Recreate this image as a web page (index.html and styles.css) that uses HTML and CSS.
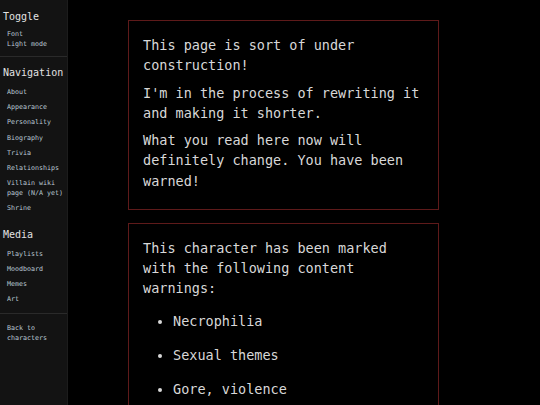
FILE: index.html
```html
<!DOCTYPE html>
<html>
<head>
<meta charset="utf-8">
<link rel="stylesheet" href="styles.css">
</head>
<body>
<div class="page">
  <nav class="sidebar">
    <div class="group">
      <h2 class="heading">Toggle</h2>
      <ul class="toggles">
        <li><a class="link">Font</a></li>
        <li><a class="link">Light mode</a></li>
      </ul>
    </div>
    <div class="group">
      <h2 class="heading">Navigation</h2>
      <ul class="links">
        <li><a class="link">About</a></li>
        <li><a class="link">Appearance</a></li>
        <li><a class="link">Personality</a></li>
        <li><a class="link">Biography</a></li>
        <li><a class="link">Trivia</a></li>
        <li><a class="link">Relationships</a></li>
        <li><a class="link">Villain wiki page (N/A yet)</a></li>
        <li><a class="link">Shrine</a></li>
      </ul>
      <h2 class="heading heading-sub">Media</h2>
      <ul class="links">
        <li><a class="link">Playlists</a></li>
        <li><a class="link">Moodboard</a></li>
        <li><a class="link">Memes</a></li>
        <li><a class="link">Art</a></li>
      </ul>
    </div>
    <div class="group group-last">
      <a class="link back">Back to characters</a>
    </div>
  </nav>
  <main class="content">
    <section class="box">
      <p>This page is sort of under construction!</p>
      <p>I'm in the process of rewriting it and making it shorter.</p>
      <p>What you read here now will definitely change. You have been warned!</p>
    </section>
    <section class="box">
      <p>This character has been marked with the following content warnings:</p>
      <ul class="warnings">
        <li>Necrophilia</li>
        <li>Sexual themes</li>
        <li>Gore, violence</li>
      </ul>
    </section>
  </main>
</div>
</body>
</html>
```
FILE: styles.css
```css
html, body {
  margin: 0;
  padding: 0;
  background: #000;
  height: 100%;
  overflow: hidden;
}
body {
  font-family: "DejaVu Sans Mono", monospace;
  color: #d8d8d8;
}
.page {
  display: flex;
  height: 405px;
}
.sidebar {
  width: 67px;
  flex: none;
  background: #131313;
  border-right: 1px solid #1c1c1c;
}
.group {
  padding: 11px 0 7px 3px;
  border-bottom: 1px solid #2a2a2a;
}
.group + .group {
  padding-top: 10px;
}
.group:nth-child(2) {
  padding-bottom: 9px;
}
.group-last {
  border-bottom: none;
  padding-top: 9px !important;
}
.heading {
  margin: 0;
  font-size: 10px;
  line-height: 12px;
  font-weight: normal;
  color: #e2e2e2;
}
.heading-sub {
  margin-top: 15.6px;
}
.toggles, .links {
  list-style: none;
  margin: 0;
  padding: 0 0 0 4px;
}
.toggles {
  margin-top: 6px;
}
.links {
  margin-top: 8px;
}
.links li {
  margin-bottom: 5.2px;
}
.links li:last-child {
  margin-bottom: 0;
}
.link {
  display: block;
  font-size: 6.65px;
  line-height: 10px;
  color: #bac8d4;
}
.back {
  padding-left: 4px;
}
.content {
  flex: 1;
  padding: 20px 0 0 60px;
  display: flex;
  flex-direction: column;
  gap: 13px;
}
.box {
  width: 281px;
  border: 1px solid #5e1a1a;
  padding: 7px 14px 11px;
  font-size: 13.5px;
  line-height: 20.25px;
}
.box p {
  margin: 7px 0;
}
.warnings {
  margin: 12px 0 0;
  padding-left: 30px;
}
.warnings li {
  margin-bottom: 13.75px;
}
```
